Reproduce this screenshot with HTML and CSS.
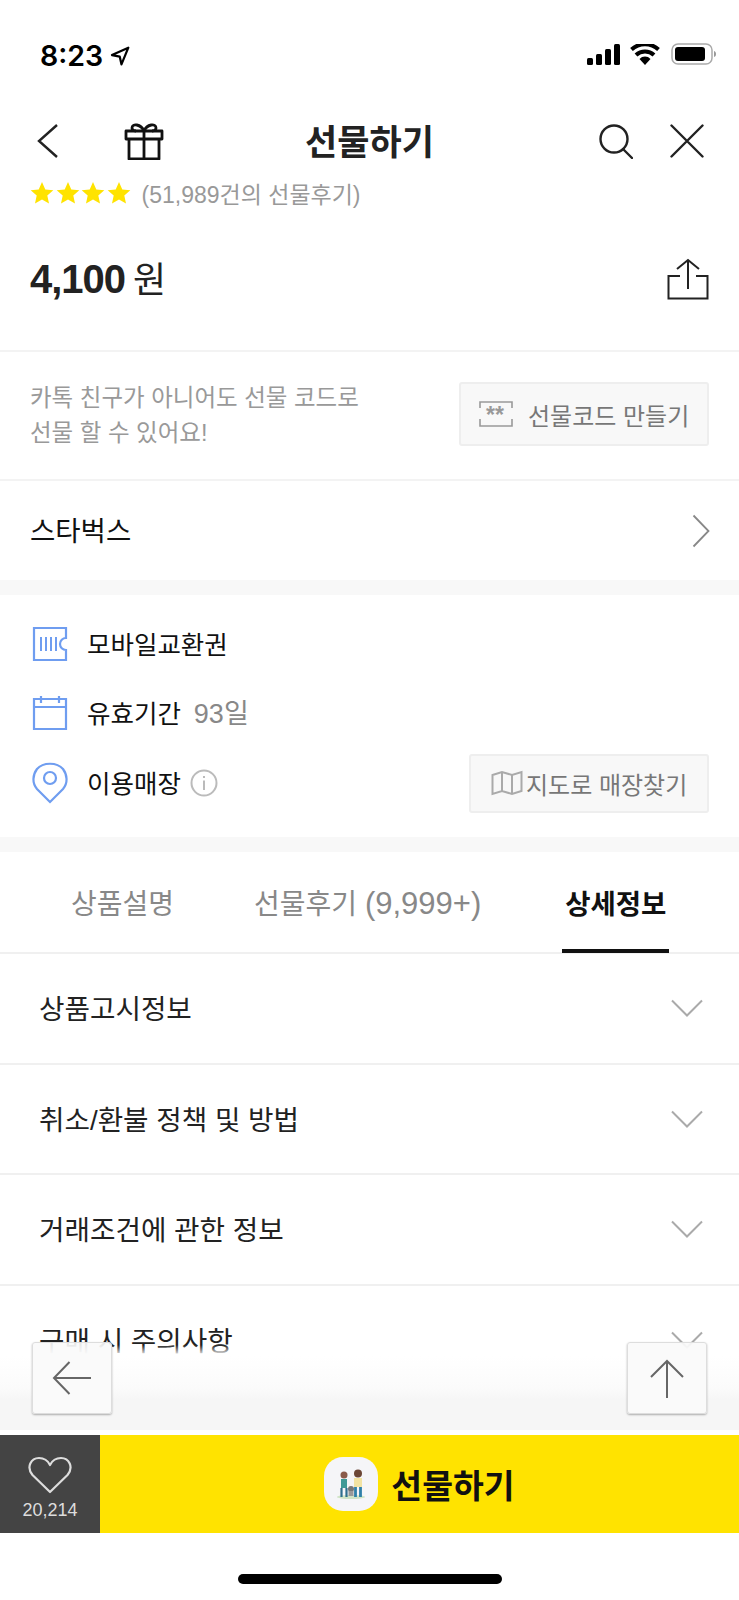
FILE: index.html
```html
<!DOCTYPE html>
<html lang="ko">
<head>
  <meta charset="UTF-8" />
  <meta name="viewport" content="width=device-width, initial-scale=1.0"/>
  <title>선물하기</title>
  <link rel="stylesheet" href="styles.css">
</head>
<body>
  <div class="screen">
    <div class="status">
      <div class="clock">
        <span>8:23</span>
        <svg width="20" height="20" viewBox="0 0 18 18"><path d="M16.5 1.5 1.8 8.2l7 1.400 1.500 6.900z" fill="none" stroke="#000" stroke-width="2" stroke-linejoin="round"/></svg>
      </div>
      <div class="status-icons">
        <svg class="signal" width="34" height="21" viewBox="0 0 34 21"><rect x="0" y="14" width="6" height="7" rx="1.5"/><rect x="9" y="10" width="6" height="11" rx="1.5"/><rect x="18" y="5" width="6" height="16" rx="1.5"/><rect x="27" y="0" width="6" height="21" rx="1.5"/></svg>
        <svg width="30" height="21" viewBox="0 0 30 21"><path d="M15 21 9.500 15a7.500 7.500 0 0 1 11 0z"/><path d="M6 11a13 13 0 0 1 18 0" fill="none" stroke="#000" stroke-width="4"/><path d="M1.500 5.500a20 20 0 0 1 27 0" fill="none" stroke="#000" stroke-width="4"/></svg>
        <svg width="46" height="22" viewBox="0 0 46 22"><rect x="1" y="1" width="40" height="20" rx="6" fill="#fff" stroke="#aaa" stroke-width="1.5"/><rect x="4" y="4" width="30" height="14" rx="3"/><path d="M43 8c1.500.5 2 1.500 2 3s-.5 2.500-2 3z" fill="#999"/></svg>
      </div>
    </div>

    <div class="nav">
      <div class="nav-left">
        <svg class="nav-back" width="22" height="36" viewBox="0 0 22 36"><path d="M20 2 2 18l18 16" fill="none" stroke="#222" stroke-width="2.4"/></svg>
        <svg width="40" height="38" viewBox="0 0 40 38"><g fill="none" stroke="#111" stroke-width="2.8" stroke-linejoin="round"><path d="M2 9h36v8H2zM5 17h30v20H5zM20 9v28"/><path d="M20 9c-3-7-12-8-12-3 0 2 2 3 4 3M20 9c3-7 12-8 12-3 0 2-2 3-4 3"/></g></svg>
      </div>
      <div class="nav-title">선물하기</div>
      <div class="nav-right">
        <svg width="34" height="35" viewBox="0 0 34 35"><g fill="none" stroke="#222" stroke-width="2.4" stroke-linecap="round"><circle cx="15" cy="15" r="13.5"/><path d="m24 25 9 9"/></g></svg>
        <svg width="34" height="34" viewBox="0 0 34 34"><path d="m1.500 1.500 31 31M32.500 1.500l-31 31" fill="none" stroke="#222" stroke-width="2.4" stroke-linecap="round"/></svg>
      </div>
    </div>

    <div class="content">
      <div class="rating">
        <div class="stars">
          <svg width="24" height="24" viewBox="0 0 24 24"><path d="m12 1 3.300 7.400 8 .8-6 5.400 1.700 7.900-7-4.100-7 4.100 1.700-7.900-6-5.400 8-.8z"/></svg>
          <svg width="24" height="24" viewBox="0 0 24 24"><path d="m12 1 3.300 7.400 8 .8-6 5.400 1.700 7.900-7-4.100-7 4.100 1.700-7.900-6-5.400 8-.8z"/></svg>
          <svg width="24" height="24" viewBox="0 0 24 24"><path d="m12 1 3.300 7.400 8 .8-6 5.400 1.700 7.900-7-4.100-7 4.100 1.700-7.900-6-5.400 8-.8z"/></svg>
          <svg width="24" height="24" viewBox="0 0 24 24"><path d="m12 1 3.300 7.400 8 .8-6 5.400 1.700 7.900-7-4.100-7 4.100 1.700-7.900-6-5.400 8-.8z"/></svg>
        </div>
        <span>(51,989건의 선물후기)</span>
      </div>

      <div class="price-row">
        <div class="price"><strong>4,100</strong> 원</div>
        <svg width="42" height="42" viewBox="0 0 42 42"><path d="M13 18H1.500v22.500h39V18H29M21 31V2M10 11 21 2l11 9" fill="none" stroke="#222" stroke-width="2"/></svg>
      </div>

      <div class="code-row">
        <p class="code-text">카톡 친구가 아니어도 선물 코드로<br>선물 할 수 있어요!</p>
        <div class="soft-btn code-btn">
          <svg width="34" height="26" viewBox="0 0 34 26"><path d="M1 7V1h32v6M1 18v7h32v-7" fill="none" stroke="#999" stroke-width="1.6"/><text x="7" y="22" class="ticket-stars">**</text></svg>
          <span>선물코드 만들기</span>
        </div>
      </div>

      <div class="brand-row">
        <span>스타벅스</span>
        <svg width="18" height="34" viewBox="0 0 18 34"><path d="m1.500 1.500 15 15.500-15 15.500" fill="none" stroke="#888" stroke-width="1.8"/></svg>
      </div>

      <div class="band"></div>

      <div class="info">
        <div class="info-row">
          <svg width="36" height="36" viewBox="0 0 36 36"><path d="M2 2h32v10a6 6 0 0 0 0 12v10H2z" fill="none" stroke="#6f9df0" stroke-width="2.2"/><path d="M9 11v14M14 11v14M19 11v14M24 11v14" stroke="#6f9df0" stroke-width="2"/></svg>
          <span>모바일교환권</span>
        </div>
        <div class="info-row">
          <svg width="36" height="36" viewBox="0 0 36 36"><path d="M2 4h32v30H2zM2 12h32M9 1v7M27 1v7" fill="none" stroke="#6f9df0" stroke-width="2.2"/></svg>
          <span>유효기간</span>
          <span class="muted">93일</span>
        </div>
        <div class="info-row store-row">
          <svg width="36" height="42" viewBox="0 0 36 42"><path d="M18 40 5 27C0 21 .5 13 5 7c6-7 20-7 26 0 4.500 6 5 14 0 20z" fill="none" stroke="#6f9df0" stroke-width="2.2"/><circle cx="18" cy="16" r="6" fill="none" stroke="#6f9df0" stroke-width="2.2"/></svg>
          <span>이용매장</span>
          <svg class="info-i" width="28" height="28" viewBox="0 0 28 28"><circle cx="14" cy="14" r="12.5" fill="none" stroke="#bbb" stroke-width="2"/><path d="M14 11.500V21M14 7v2" stroke="#aaa" stroke-width="1.6"/></svg>
          <div class="soft-btn map-btn">
            <svg width="32" height="26" viewBox="0 0 32 26"><path d="M1.500 5 11 2l10 3 9.500-3v19L21 24l-10-3-9.500 3zM11 2v19M21 5v19" fill="none" stroke="#aaa" stroke-width="2"/></svg>
            <span>지도로 매장찾기</span>
          </div>
        </div>
      </div>

      <div class="band"></div>

      <div class="tabs">
        <div class="tab">상품설명</div>
        <div class="tab">선물후기 <span class="tab-num">(9,999+)</span></div>
        <div class="tab active">상세정보</div>
      </div>

      <div class="acc-row"><span>상품고시정보</span><svg class="acc-arrow" width="32" height="18" viewBox="0 0 32 18"><path d="m1 1.500 15 15 15-15" fill="none" stroke="#aaa" stroke-width="2"/></svg></div>
      <div class="acc-row"><span>취소/환불 정책 및 방법</span><svg class="acc-arrow" width="32" height="18" viewBox="0 0 32 18"><path d="m1 1.500 15 15 15-15" fill="none" stroke="#aaa" stroke-width="2"/></svg></div>
      <div class="acc-row"><span>거래조건에 관한 정보</span><svg class="acc-arrow" width="32" height="18" viewBox="0 0 32 18"><path d="m1 1.500 15 15 15-15" fill="none" stroke="#aaa" stroke-width="2"/></svg></div>
      <div class="acc-row"><span>구매 시 주의사항</span><svg class="acc-arrow" width="32" height="18" viewBox="0 0 32 18"><path d="m1 1.500 15 15 15-15" fill="none" stroke="#aaa" stroke-width="2"/></svg></div>

      <div class="fade"></div>
      <div class="float-btn float-left">
        <svg width="40" height="34" viewBox="0 0 40 34"><path d="M39 17H2M17.500 1 2 17l15.500 16" fill="none" stroke="#666" stroke-width="2"/></svg>
      </div>
      <div class="float-btn float-right">
        <svg width="34" height="39" viewBox="0 0 34 39"><path d="M17 39V2M1 18 17 2l16 16" fill="none" stroke="#666" stroke-width="2"/></svg>
      </div>
    </div>

    <div class="buy-bar">
      <div class="like">
        <svg width="44" height="38" viewBox="0 0 44 38"><path d="M22 36 4.500 19C-2 11 3 2 11 2c5 0 9 3 11 7 2-4 6-7 11-7 8 0 13 9 6.500 17z" fill="none" stroke="#ddd" stroke-width="2.2" stroke-linejoin="round"/></svg>
        <span>20,214</span>
      </div>
      <div class="buy">
        <div class="buy-thumb">
          <svg width="30" height="32" viewBox="0 0 30 32">
            <ellipse cx="15" cy="29" rx="14" ry="2" fill="#cfe3c5"/>
            <circle cx="8" cy="7" r="3.500" fill="#8a5a4a"/><rect x="5" y="11" width="6" height="9" fill="#3f9a97"/><path d="M5.500 20v9M10.500 20v9" stroke="#2f6f8f" stroke-width="2.2"/>
            <circle cx="22" cy="5.500" r="4" fill="#6b4636"/><rect x="18" y="10" width="8" height="9" fill="#f2e3a3"/><path d="M19.500 19v10M24.500 19v10" stroke="#2f80a8" stroke-width="2.8"/>
            <circle cx="15" cy="21" r="3" fill="#777"/><rect x="12.500" y="23" width="5" height="5" fill="#999"/>
          </svg>
        </div>
        <span>선물하기</span>
      </div>
    </div>

    <div class="home-area"><div class="home-bar"></div></div>
  </div>
</body>
</html>
```

FILE: styles.css
```css
* {
  box-sizing: border-box;
}
body {
  margin: 0;
  background: #fff;
  font-family: "Liberation Sans", "Noto Sans CJK KR", sans-serif;
  color: #111;
}
.screen {
  width: 739px;
  height: 1600px;
  overflow: hidden;
  display: flex;
  flex-direction: column;
}
svg {
  display: block;
  flex: none;
}

.status {
  height: 101px;
  flex: none;
  display: flex;
  justify-content: space-between;
  align-items: flex-start;
  padding: 38px 22px 0 40px;
}
.clock {
  display: flex;
  align-items: center;
  gap: 7px;
  font-family: Inter, sans-serif;
  font-size: 28.5px;
  font-weight: 600;
  color: #000;
}
.status-icons {
  display: flex;
  align-items: center;
  gap: 11px;
  padding-top: 5px;
}
.signal {
  margin-right: -2px;
}

.nav {
  height: 80px;
  flex: none;
  position: relative;
  display: flex;
  justify-content: space-between;
  align-items: center;
  padding: 0 35px 0 37px;
}
.nav-left {
  display: flex;
  align-items: center;
  gap: 65px;
}
.nav-title {
  position: absolute;
  left: 0;
  right: 0;
  margin-top: -4px;
  text-align: center;
  font-size: 35px;
  font-weight: 700;
  color: #222;
}
.nav-right {
  display: flex;
  align-items: center;
  gap: 37px;
}

.content {
  flex: 1;
  min-height: 0;
  position: relative;
  overflow: hidden;
}
.rating {
  height: 27px;
  display: flex;
  align-items: center;
  gap: 11px;
  padding: 0 0 3px 30px;
  font-size: 23px;
  color: #999;
}
.stars {
  display: flex;
  gap: 1.5px;
  fill: #ffe300;
}
.price-row {
  height: 144px;
  display: flex;
  justify-content: space-between;
  align-items: center;
  padding: 0 30px;
  border-bottom: 2px solid #f3f3f3;
}
.price {
  font-size: 36px;
  color: #222;
  margin-top: -5px;
  word-spacing: -2px;
}
.price strong {
  font-size: 40px;
  letter-spacing: -1px;
}

.code-row {
  height: 129px;
  display: flex;
  justify-content: space-between;
  align-items: center;
  padding: 0 30px;
  border-bottom: 2px solid #f3f3f3;
}
.code-text {
  margin: 0;
  font-size: 23.5px;
  line-height: 35px;
  color: #999;
}
.soft-btn {
  display: flex;
  align-items: center;
  background: #f8f8f8;
  border: 2px solid #eee;
  border-radius: 3px;
  color: #777;
  font-size: 24px;
}
.code-btn {
  width: 250px;
  height: 64px;
  margin-top: -3px;
  gap: 15px;
  padding-left: 18px;
}
.ticket-stars {
  font-family: "Liberation Sans", sans-serif;
  font-size: 23px;
  font-weight: 700;
  fill: #999;
}

.brand-row {
  height: 99px;
  display: flex;
  justify-content: space-between;
  align-items: center;
  padding: 0 29px 0 30px;
  font-size: 27.5px;
  color: #111;
}
.brand-row span {
  margin-bottom: 3px;
}
.band {
  height: 15px;
  background: #f8f8f8;
}

.info {
  height: 242px;
  padding: 21px 30px 0 32px;
  font-size: 25.5px;
}
.info-row {
  display: flex;
  align-items: center;
  gap: 19px;
  height: 56px;
}
.info-row + .info-row {
  margin-top: 13px;
}
.info-row > span {
  margin-bottom: 3px;
}
.muted {
  color: #888;
  font-size: 27px;
  margin-left: -6px;
}
.info-row + .store-row {
  height: 72px;
  margin-top: 6px;
}
.info-i {
  margin-left: -10px;
}
.map-btn {
  margin-left: auto;
  width: 240px;
  height: 59px;
  gap: 3px;
  padding-left: 20px;
  white-space: nowrap;
}

.tabs {
  height: 102px;
  display: flex;
  border-bottom: 2px solid #f0f0f0;
  padding-left: 71px;
  font-size: 28px;
  color: #888;
}
.tab {
  height: 101px;
  padding-top: 30px;
  margin-right: 80px;
  white-space: nowrap;
}
.tab-num {
  font-size: 31px;
}
.tab.active {
  position: relative;
  color: #111;
  font-size: 27.5px;
  font-weight: 700;
  margin-right: 0;
  margin-left: 4px;
}
.tab.active::after {
  content: "";
  position: absolute;
  left: -3px;
  right: -3px;
  bottom: 0;
  height: 4px;
  background: #111;
}

.acc-row {
  height: 110.5px;
  display: flex;
  justify-content: space-between;
  align-items: center;
  padding: 0 36px 0 39px;
  border-bottom: 2px solid #f0f0f0;
  font-size: 27.7px;
  color: #222;
}
.acc-row span {
  margin-bottom: 2px;
}

.fade {
  position: absolute;
  left: 0;
  right: 0;
  bottom: 0;
  height: 90px;
  background: linear-gradient(rgba(255,255,255,0), #fff 12%, #fbfbfb 48%, #f6f6f6 60%, #f6f6f6 95%, #fff 95%);
}
.float-btn {
  position: absolute;
  bottom: 21px;
  width: 80px;
  height: 72px;
  display: flex;
  align-items: center;
  justify-content: center;
  background: rgba(250,250,250,0.92);
  border: 1px solid #ddd;
  border-radius: 3px;
  box-shadow: 0 1px 2px rgba(0,0,0,0.3);
}
.float-left {
  left: 32px;
}
.float-right {
  right: 32px;
}

.buy-bar {
  height: 98px;
  flex: none;
  display: flex;
}
.like {
  width: 100px;
  background: #444;
  display: flex;
  flex-direction: column;
  align-items: center;
  padding-top: 21px;
  gap: 6px;
  font-size: 18px;
  color: #ddd;
}
.buy {
  flex: 1;
  background: #ffe300;
  display: flex;
  justify-content: center;
  align-items: center;
  gap: 13px;
  font-size: 33.5px;
  font-weight: 700;
  color: #111;
}
.buy span {
  margin-bottom: 2px;
}
.buy-thumb {
  width: 54px;
  height: 54px;
  border-radius: 19px;
  background: #f5f5f8;
  display: flex;
  align-items: center;
  justify-content: center;
}
.home-area {
  height: 67px;
  flex: none;
  display: flex;
  justify-content: center;
  padding-top: 41px;
}
.home-bar {
  width: 264px;
  height: 10px;
  border-radius: 5px;
  background: #000;
}
```
